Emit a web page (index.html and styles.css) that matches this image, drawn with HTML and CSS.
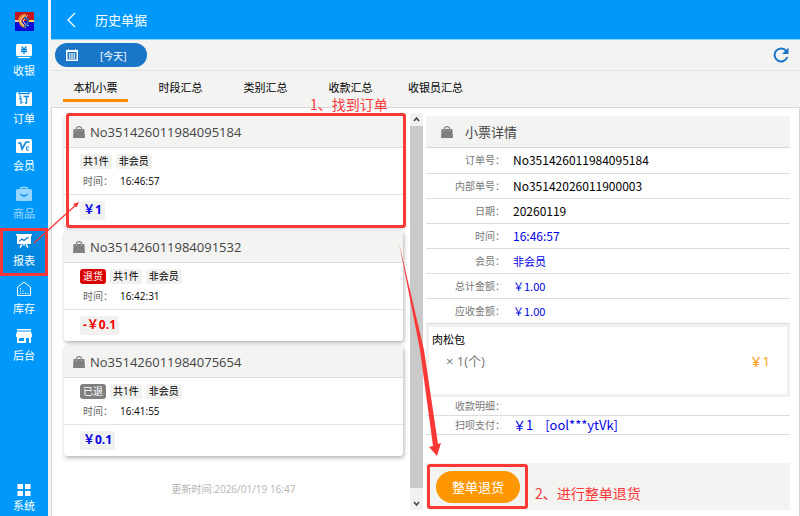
FILE: index.html
```html
<!DOCTYPE html>
<html lang="zh-CN">

<head>
  <meta charset="UTF-8">
  <meta name="viewport" content="width=device-width, initial-scale=1.0">
  <title>历史单据</title>
  <link rel="stylesheet" href="styles.css">
</head>

<body>

  <svg class="sprite" width="0" height="0" aria-hidden="true">
    <symbol id="bag" viewBox="0 0 12 12">
      <path d="M.6 3h10.800l.6 9H0z" fill="#808080"/>
      <path d="M3.500 4V2.500Q3.500 .6 6 .6T8.500 2.500V4" fill="none" stroke="#808080" stroke-width="1.200"/>
      <path d="M3.500 3.500v1.500M8.500 3.500v1.500" stroke="#b8b8b8"/>
    </symbol>
  </svg>

  <div class="app">
    <nav class="sidebar">
      <svg class="logo" viewBox="0 0 19 19">
        <path fill="#c81420" d="M0 0h19v9H0z"/>
        <path fill="#0a0ad8" d="M0 9h19v10H0z"/>
        <path fill="#f4c89a" d="M0 8h4v2H0z"/>
        <path fill="#ffd84a" d="M13 8h6v2h-6z"/>
        <path d="M11 3Q4 4 5 9t6 6" fill="none" stroke="#e8953a" stroke-width="3"/>
        <path d="M9 4L5 9l4 5M12 4L8 9l4 5" fill="none" stroke="#ffe9b0"/>
        <path d="M9 6q5 0 4 4t-4 5" fill="none" stroke="#2f5fa8" stroke-width="2"/>
        <path d="M11 5l2-2M12 13l2 1" stroke="#8ac6f0"/>
      </svg>

      <ul class="menu">
        <li><a href="#">
          <svg viewBox="0 0 16 16"><rect y="1" width="16" height="12" rx="1.500" fill="#fff"/><path d="M2 14.500h12" stroke="#fff" stroke-width="1.200"/><path d="M5.500 3.500L8 6l2.500-2.500M5 6.500h6M5 8.500h6M8 6v5" stroke="#0d8ae0" stroke-width="1.300" fill="none"/></svg>
          <span>收银</span></a></li>
        <li><a href="#">
          <svg viewBox="0 0 16 16"><rect y="1" width="16" height="14" rx="1.500" fill="#fff"/><path d="M3 1v1.500h10V1M3.500 4.500l1.500 1.500M3 7.500h2V12l1.500-1M7.500 5.500H13M10.500 5.500V12H9" stroke="#0d8ae0" stroke-width="1.300" fill="none"/></svg>
          <span>订单</span></a></li>
        <li><a href="#">
          <svg viewBox="0 0 16 16"><rect y="1" width="16" height="14" rx="1.500" fill="#fff"/><path d="M2 5h2.500L6 11l4-7h3.500" stroke="#0d8ae0" stroke-width="1.600" fill="none"/><path d="M13 9h-2.500v3H13" stroke="#0d8ae0" fill="none"/></svg>
          <span>会员</span></a></li>
        <li class="disabled"><a href="#">
          <svg viewBox="0 0 16 16"><rect y="3" width="16" height="12" rx="1.500" fill="#fff"/><path d="M5 4V1.500h6V4" stroke="#fff" stroke-width="1.500" fill="none"/><path d="M4.500 8q3.500 4 7 0" stroke="#0d8ae0" stroke-width="1.300" fill="none"/></svg>
          <span>商品</span></a></li>
        <li class="active"><a href="#">
          <svg viewBox="0 0 16 16"><path d="M0 1h16v1.500h-1V11H1V2.500H0z" fill="#fff"/><path d="M8 11v1.500M6 11.500l-2 3M10 11.500l2 3" stroke="#fff" stroke-width="1.500"/><path d="M3.500 8L6 6l2 1.500L12.500 4" stroke="#0879cc" stroke-width="1.200" fill="none"/></svg>
          <span>报表</span></a></li>
        <li><a href="#">
          <svg viewBox="0 0 16 16"><path d="M1.500 14.500V6L8 1.200 14.500 6v8.500z" fill="none" stroke="#fff"/><path d="M4.500 7v1M4.500 9.500v1M4.500 12v1M7 9.500v1M7 12v1M9.500 12v1M12 12v1" stroke="#fff" stroke-width="1.200"/></svg>
          <span>库存</span></a></li>
        <li><a href="#">
          <svg viewBox="0 0 16 16"><path d="M1 1h14v1.500H1zM1 3.500h14l1 3.500v2H0V7zM1 9h14v6h-2v-5h-3v5H1zM3 10v3h5v-3z" fill="#fff" fill-rule="evenodd"/></svg>
          <span>后台</span></a></li>
        <li class="system"><a href="#">
          <svg viewBox="0 0 16 16"><path d="M1.500 2H7v5H1.500zM9 2h5.500v5H9zM1.500 9H7v5H1.500zM9 9h5.500v5H9z" fill="#fff"/></svg>
          <span>系统</span></a></li>
      </ul>
    </nav>

    <main class="page">
      <header class="topbar">
        <button type="button" class="back" aria-label="返回">
          <svg viewBox="0 0 9 16"><path d="M8 1L1 8l7 7" fill="none" stroke="#fff" stroke-width="1.300"/></svg>
        </button>
        <h1>历史单据</h1>
      </header>

      <div class="toolbar">
        <button type="button" class="date">
          <svg viewBox="0 0 12 12"><path d="M0 1h12v11H0zM1.500 3v7.500h9V3z" fill="#fff" fill-rule="evenodd"/><path d="M2.500 0v2M9.500 0v2" stroke="#fff"/><path d="M3 5h6M3 7h6M3 9h6" stroke="#fff" stroke-width="1.300" stroke-dasharray="1.500 .75"/></svg>
          <span>[今天]</span>
        </button>
        <button type="button" class="refresh" aria-label="刷新">
          <svg viewBox="0 0 16 16"><path d="M13.300 4A6.500 6.500 0 1 0 14.300 10" fill="none" stroke="#1976c8" stroke-width="2"/><path d="M15.500 .5v6.500H9z" fill="#1976c8"/></svg>
        </button>
      </div>

      <div class="tabs">
        <button type="button" class="tab selected">本机小票</button>
        <button type="button" class="tab">时段汇总</button>
        <button type="button" class="tab">类别汇总</button>
        <button type="button" class="tab">收款汇总</button>
        <button type="button" class="tab">收银员汇总</button>
      </div>

      <div class="content">
        <section class="list">
          <article class="card">
            <h2><svg><use href="#bag"/></svg>No351426011984095184</h2>
            <div class="card-body">
              <div class="tags"><span class="tag">共1件</span><span class="tag">非会员</span></div>
              <div class="time"><span>时间：</span>16:46:57</div>
            </div>
            <div class="card-total"><b class="tag">￥1</b></div>
            <div class="mark"></div>
          </article>

          <article class="card">
            <h2><svg><use href="#bag"/></svg>No351426011984091532</h2>
            <div class="card-body">
              <div class="tags"><span class="tag red">退货</span><span class="tag">共1件</span><span class="tag">非会员</span></div>
              <div class="time"><span>时间：</span>16:42:31</div>
            </div>
            <div class="card-total"><b class="tag minus">-￥0.1</b></div>
          </article>

          <article class="card">
            <h2><svg><use href="#bag"/></svg>No351426011984075654</h2>
            <div class="card-body">
              <div class="tags"><span class="tag grey">已退</span><span class="tag">共1件</span><span class="tag">非会员</span></div>
              <div class="time"><span>时间：</span>16:41:55</div>
            </div>
            <div class="card-total"><b class="tag">￥0.1</b></div>
          </article>

          <p class="updated">更新时间:2026/01/19 16:47</p>
        </section>

        <div class="scrollbar">
          <svg viewBox="0 0 13 13"><path d="M4 8l2.500-3L9 8" fill="none" stroke="#444" stroke-width="1.500"/></svg>
          <div class="thumb"></div>
          <svg viewBox="0 0 13 13"><path d="M4 5l2.500 3L9 5" fill="none" stroke="#444" stroke-width="1.500"/></svg>
        </div>

        <section class="detail">
          <h2><svg><use href="#bag"/></svg>小票详情</h2>
          <table class="info">
            <tr><th>订单号：</th><td>No351426011984095184</td></tr>
            <tr><th>内部单号：</th><td>No35142026011900003</td></tr>
            <tr><th>日期：</th><td>20260119</td></tr>
            <tr><th>时间：</th><td class="blue">16:46:57</td></tr>
            <tr><th>会员：</th><td class="blue cjk">非会员</td></tr>
            <tr><th>总计金额：</th><td class="blue cjk">￥1.00</td></tr>
            <tr><th>应收金额：</th><td class="blue cjk">￥1.00</td></tr>
          </table>

          <div class="goods">
            <strong>肉松包</strong>
            <div class="goods-row"><span>× 1(个)</span><em>￥1</em></div>
          </div>

          <table class="info pay">
            <tr><th>收款明细：</th><td></td></tr>
            <tr><th>扫呗支付：</th><td class="blue">￥1<span class="account">[ool***ytVk]</span></td></tr>
          </table>

          <footer class="actions">
            <div class="refund-wrap">
              <button type="button" class="refund">整单退货</button>
              <div class="mark"></div>
            </div>
            <span class="note">2、进行整单退货</span>
          </footer>
        </section>
      </div>
    </main>

    <!-- 步骤标注和箭头 -->
    <span class="note note-find">1、找到订单</span>
    <svg class="arrows" width="800" height="516" viewBox="0 0 800 516">
      <path d="M34 243L77 204" stroke="#fb3838" stroke-width="1.300"/>
      <path d="M79 202l-2.500 5.500-3.500-3.500z" fill="#fb3838"/>
      <path d="M399 243L424 350 438 444 441 443 437 456 429 447 433 446 420 350z" fill="#fb3838"/>
    </svg>
  </div>

</body>

</html>
```

FILE: styles.css
```css
* {
  box-sizing: border-box;
}

body {
  margin: 0;
  font-family: "Open Sans", "Noto Sans CJK SC", sans-serif;
  font-size: 11px;
  color: #000;
  background-color: #f3f3f2;
}

button {
  padding: 0;
  border: none;
  background: none;
  font-family: inherit;
  cursor: pointer;
}

h1,
h2,
p,
ul {
  margin: 0;
  padding: 0;
  font-weight: normal;
}

.sprite {
  position: absolute;
}

.app {
  position: relative;
  display: flex;
  min-height: 100vh;
}

/* 左侧菜单 */
.sidebar {
  display: flex;
  flex-direction: column;
  width: 48px;
  padding-top: 12px;
  background-color: #0099fb;
}

.logo {
  width: 19px;
  height: 19px;
  margin: 0 auto 7px;
}

.menu {
  display: flex;
  flex: 1;
  flex-direction: column;
  list-style: none;
}

.menu li {
  height: 48px;
}

.menu li:nth-child(even) {
  height: 47px;
}

.menu a {
  display: flex;
  flex-direction: column;
  align-items: center;
  gap: 4px;
  height: 100%;
  padding-top: 5px;
  color: #fff;
  line-height: 16px;
  text-decoration: none;
}

.menu svg {
  width: 16px;
  height: 16px;
}

.menu .disabled a {
  opacity: 0.6;
}

.menu .active {
  border: 3px solid #fb3838;
  background-color: #0088e0;
}

.menu .active a {
  padding-top: 2px;
}

.menu li.system:last-child {
  height: 36px;
  margin-top: auto;
}

.menu .system a {
  gap: 0;
  padding-top: 2px;
}

/* 右侧页面 */
.page {
  display: flex;
  flex: 1;
  flex-direction: column;
  min-width: 0;
  margin-left: 3px;
}

.topbar {
  display: flex;
  align-items: center;
  gap: 19px;
  height: 40px;
  padding-left: 16px;
  border-bottom: 1px solid #8fd0fa;
  background-color: #0099fb;
  color: #fff;
}

.topbar h1 {
  font-size: 13px;
}

.back svg {
  display: block;
  width: 9px;
  height: 16px;
}

.toolbar {
  display: flex;
  align-items: center;
  justify-content: space-between;
  height: 31px;
  padding: 0 11px 0 4px;
  border-bottom: 1px solid #e4e4e4;
}

.date {
  display: flex;
  align-items: center;
  gap: 22px;
  width: 92px;
  height: 24px;
  padding-left: 11px;
  border-radius: 12px;
  background-color: #1976c8;
  color: #fff;
  font-size: 10px;
}

.date svg {
  width: 12px;
  height: 12px;
}

.refresh svg {
  display: block;
  width: 16px;
  height: 16px;
}

.tabs {
  display: flex;
  height: 37px;
  padding-left: 2px;
  border-bottom: 1px solid #d8d8d8;
}

.tab {
  width: 65px;
  height: 31px;
  margin: 0 10px;
  padding-top: 6px;
  border-bottom: 3px solid transparent;
  font-size: 11px;
  line-height: 14px;
  white-space: nowrap;
}

.tab.selected {
  border-image: linear-gradient(#ff8a00, #ff8a00) 1;
}

.content {
  display: grid;
  flex: 1;
  grid-template-columns: 358fr 13px 376fr;
  border: 1px solid #d8d8d8;
  border-width: 0 1px;
  background-color: #fff;
}

.list {
  padding: 8px 7px 0 12px;
}

/* 小票卡片 */
.card {
  position: relative;
  margin-bottom: 5px;
  border-radius: 3px;
  background-color: #fff;
  box-shadow: 1px 2px 4px rgba(0, 0, 0, 0.3);
}

.card h2 {
  display: flex;
  align-items: center;
  gap: 5px;
  height: 32px;
  padding-left: 9px;
  border-bottom: 1px solid #dcdcdc;
  background-color: #f3f3f2;
  color: #444;
  font-size: 13px;
}

h2 svg {
  width: 12px;
  height: 12px;
}

.card-body {
  height: 47px;
  padding: 6px 16px 0;
  border-bottom: 1px solid #e4e4e4;
}

.tags {
  display: flex;
  gap: 4px;
}

.tag {
  padding: 0 3px;
  border-radius: 3px;
  background-color: #f1f1f0;
  font-size: 10px;
  line-height: 15px;
}

.tag.red {
  background-color: #d80000;
  color: #fff;
}

.tag.grey {
  background-color: #808080;
  color: #fff;
}

.time {
  padding-left: 3px;
  font-size: 10px;
  line-height: 24px;
}

.time span {
  display: inline-block;
  width: 37px;
  color: #666;
}

.card-total {
  display: flex;
  height: 31px;
  padding: 6px 16px;
}

.card-total .tag {
  padding: 0 3px;
  color: #0000e8;
  font-size: 12px;
  line-height: 18px;
}

.card-total .minus {
  color: #f00000;
}

.updated {
  padding-top: 20px;
  color: #b4b4b4;
  font-size: 10px;
  text-align: center;
}

.scrollbar {
  display: flex;
  flex-direction: column;
  margin: 5px 0 6px;
  background-color: #f1f1f1;
}

.scrollbar svg {
  width: 13px;
  height: 13px;
}

.thumb {
  flex: 1;
  margin-bottom: 9px;
  background-color: #c9c9c9;
}

/* 小票详情 */
.detail {
  display: flex;
  flex-direction: column;
  padding: 8px 9px 6px 3px;
}

.detail h2 {
  display: flex;
  align-items: center;
  gap: 12px;
  height: 32px;
  padding-left: 15px;
  border-bottom: 1px solid #d8d8d8;
  background-color: #f3f3f2;
  color: #444;
  font-size: 13px;
}

.info {
  width: 100%;
  border-collapse: collapse;
}

.info th,
.info td {
  height: 25px;
  padding: 0;
  border-bottom: 1px solid #dcdcdc;
  line-height: 16px;
  text-align: left;
}

.info th {
  width: 87px;
  padding-right: 8px;
  color: #777;
  font-size: 10px;
  font-weight: normal;
  text-align: right;
  white-space: nowrap;
}

.info td {
  font-family: "Noto Sans CJK SC", sans-serif;
  font-size: 12px;
}

.info .cjk {
  font-size: 11px;
}

.info .blue {
  color: #0000e8;
}

.goods {
  height: 73px;
  padding: 3px;
  border: 3px solid #f1f1f0;
}

.goods strong {
  font-size: 11px;
  font-weight: normal;
  line-height: 20px;
}

.goods-row {
  display: flex;
  justify-content: space-between;
  padding: 0 14px;
  color: #777;
  font-size: 13px;
  line-height: 22px;
}

.goods em {
  color: #ff9800;
  font-style: normal;
}

.pay th,
.pay td {
  height: 19px;
}

.pay td {
  font-size: 13px;
}

.account {
  margin-left: 12px;
}

.actions {
  display: flex;
  align-items: center;
  gap: 15px;
  height: 47px;
  margin-top: auto;
  padding-left: 10px;
  background-color: #f3f3f2;
}

.refund-wrap {
  position: relative;
}

.refund {
  display: block;
  width: 84px;
  height: 32px;
  border-radius: 16px;
  background-color: #ff9800;
  color: #fff;
  font-size: 13px;
}

/* 红色标注 */
.mark {
  position: absolute;
  inset: -3px -3px -2px 2px;
  border: 3px solid #fb3838;
  border-radius: 3px;
  pointer-events: none;
}

.refund-wrap .mark {
  inset: -7px -8px -6px -9px;
}

.note {
  color: #fb3838;
  font-family: "Noto Sans CJK SC", sans-serif;
  font-size: 14px;
  line-height: 16px;
}

.actions .note {
  margin-top: 12px;
}

.note-find {
  position: absolute;
  top: 96px;
  left: 310px;
}

.arrows {
  position: absolute;
  top: 0;
  left: 0;
  pointer-events: none;
}
```
